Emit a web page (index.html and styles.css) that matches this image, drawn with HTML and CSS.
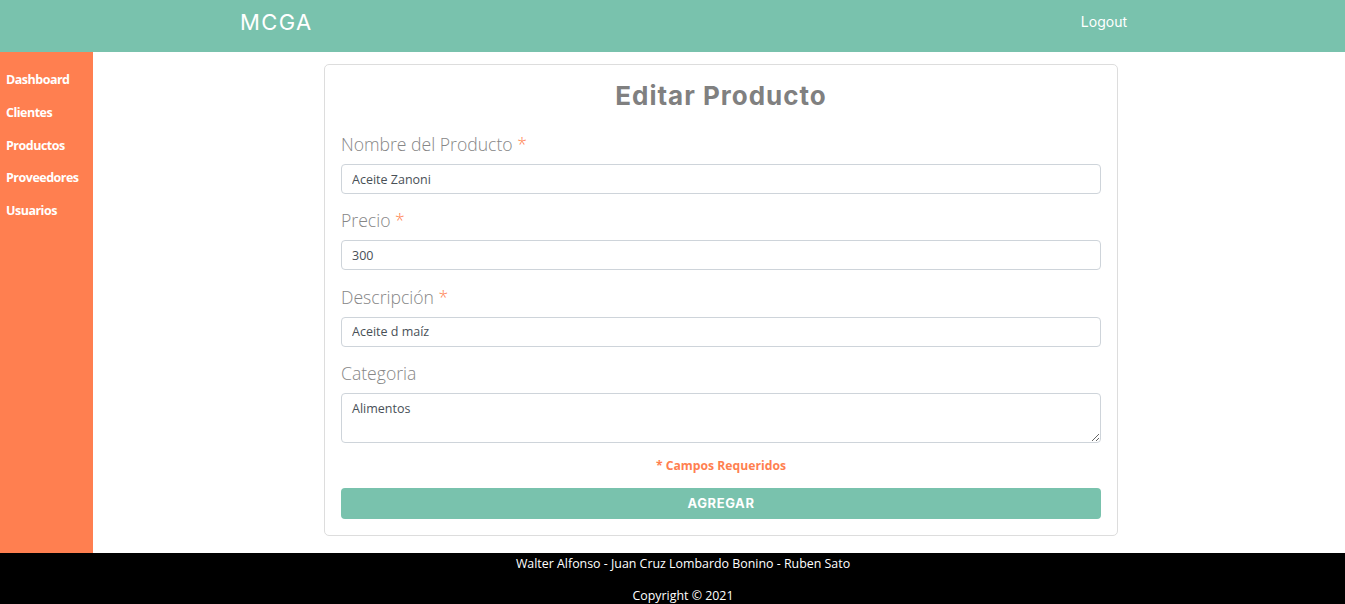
FILE: index.html
```html
<!DOCTYPE html>
<html lang="es">
<head>
<meta charset="utf-8">
<title>MCGA</title>
<link rel="stylesheet" href="styles.css">
</head>
<body>
<header class="topbar">
  <div class="brand">MCGA</div>
  <a class="logout" href="#">Logout</a>
</header>
<div class="layout">
  <nav class="sidebar">
    <a href="#">Dashboard</a>
    <a href="#">Clientes</a>
    <a href="#">Productos</a>
    <a href="#">Proveedores</a>
    <a href="#">Usuarios</a>
  </nav>
  <main class="main">
    <form class="card">
      <h1 class="title">Editar Producto</h1>
      <label class="label">Nombre del Producto <span class="req">*</span></label>
      <input class="field" type="text" value="Aceite Zanoni">
      <label class="label">Precio <span class="req">*</span></label>
      <input class="field" type="text" value="300">
      <label class="label">Descripción <span class="req">*</span></label>
      <input class="field" type="text" value="Aceite d maíz">
      <label class="label">Categoria</label>
      <textarea class="field area">Alimentos</textarea>
      <p class="note">* Campos Requeridos</p>
      <button class="submit" type="button">AGREGAR</button>
    </form>
  </main>
</div>
<footer class="footer">
  <p>Walter Alfonso - Juan Cruz Lombardo Bonino - Ruben Sato</p>
  <p>Copyright © 2021</p>
</footer>
</body>
</html>
```
FILE: styles.css
```css
* { box-sizing: border-box; }
html, body { margin: 0; padding: 0; }
body {
  font-family: "Open Sans", "Noto Sans", sans-serif;
  background: #fff;
  width: 1345px;
  height: 604px;
  overflow: hidden;
}
.topbar {
  height: 52px;
  background: #79c2ad;
  display: flex;
  justify-content: space-between;
  align-items: flex-start;
  padding: 0 218px 0 240px;
  color: #fff;
}
.brand {
  font-family: Inter, "Open Sans", sans-serif;
  font-size: 22px;
  font-weight: 400;
  line-height: 44px;
  letter-spacing: 1.4px;
}
.logout {
  font-family: Inter, "Open Sans", sans-serif;
  color: #fff;
  text-decoration: none;
  font-size: 14px;
  line-height: 44px;
}
.layout {
  display: flex;
  height: 501px;
}
.sidebar {
  width: 93px;
  background: #ff7f50;
  display: flex;
  flex-direction: column;
  padding: 19px 0 0 6px;
  gap: 14.8px;
}
.sidebar a {
  color: #fff;
  text-decoration: none;
  font-weight: 700;
  font-size: 12.5px;
  line-height: 18px;
  letter-spacing: -0.5px;
}
.main {
  flex: 1;
  display: flex;
  justify-content: center;
  align-items: flex-start;
  padding: 12px 0 0 4px;
}
.card {
  width: 794px;
  border: 1px solid #ddd;
  border-radius: 5px;
  padding: 15px 16px 16px 16px;
  display: flex;
  flex-direction: column;
}
.title {
  margin: 0 0 19px;
  text-align: center;
  font-family: Inter, "Open Sans", sans-serif;
  font-weight: 700;
  font-size: 26px;
  line-height: 32px;
  letter-spacing: 1px;
  color: #808080;
}
.label {
  font-size: 17.6px;
  font-weight: 300;
  line-height: 27px;
  color: #868686;
  margin-bottom: 6px;
}
.req { color: #ff7f50; }
.field {
  display: block;
  width: 100%;
  height: 30px;
  border: 1px solid #ced4da;
  border-radius: 4px;
  padding: 0 10px;
  font-family: "Open Sans", sans-serif;
  font-size: 12.5px;
  color: #495057;
  margin: 0 0 13.3px;
}
.area {
  height: 50px;
  padding-top: 6px;
  resize: vertical;
  margin-bottom: 13px;
}
.note {
  margin: 0 0 12px;
  text-align: center;
  color: #ff7f50;
  font-weight: 700;
  font-size: 12.2px;
  line-height: 20px;
}
.submit {
  width: 100%;
  height: 31px;
  border: 0;
  border-radius: 4px;
  background: #79c2ad;
  color: #fff;
  font-family: Inter, "Open Sans", sans-serif;
  font-weight: 700;
  font-size: 13px;
  letter-spacing: 0.6px;
}
.footer {
  background: #000;
  color: #fff;
  height: 51px;
  text-align: center;
  padding-left: 21px;
  font-size: 12.4px;
}
.footer p {
  margin: 0;
  line-height: 20px;
}
.footer p:first-child { padding-top: 1px; margin-bottom: 12px; }
```
